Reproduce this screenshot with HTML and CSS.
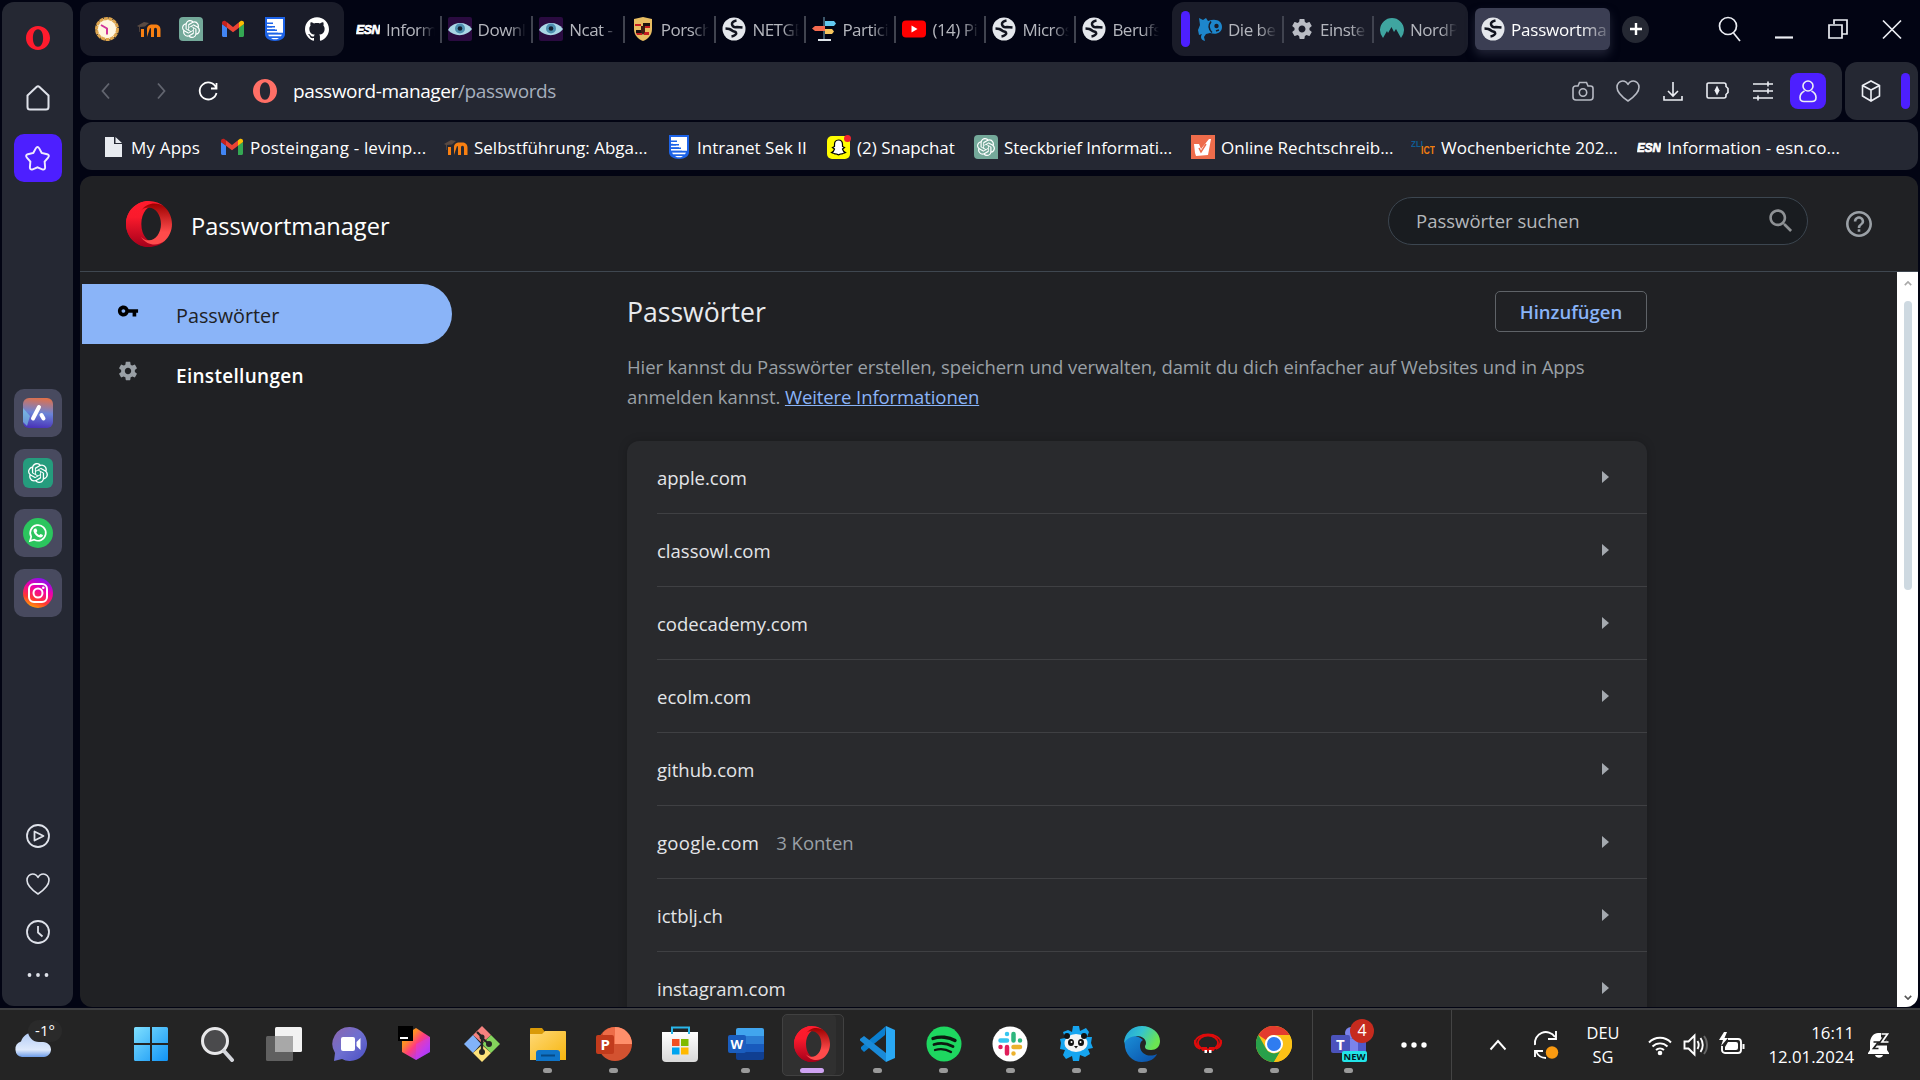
FILE: index.html
```html
<!DOCTYPE html>
<html lang="de">
<head>
<meta charset="utf-8">
<title>Passwortmanager</title>
<link rel="stylesheet" href="styles.css">
</head>
<body>
<svg class="defs" width="0" height="0">
  <defs>
    <linearGradient id="gRing" x1="0" y1="0" x2="0" y2="1"><stop offset="0" stop-color="#ff1b2d"/><stop offset=".35" stop-color="#fa1a2c"/><stop offset="1" stop-color="#a5001b"/></linearGradient>
    <linearGradient id="gInner" x1="0" y1="0" x2="0" y2="1"><stop offset="0" stop-color="#9c0000"/><stop offset=".7" stop-color="#ff4b4b"/></linearGradient>
    <linearGradient id="gWin" x1="0" y1="0" x2="1" y2="1"><stop offset="0" stop-color="#7fe0ff"/><stop offset="1" stop-color="#1193f5"/></linearGradient>
    <linearGradient id="gChat" x1="0" y1="0" x2="1" y2="1"><stop offset="0" stop-color="#8d66ad"/><stop offset=".5" stop-color="#6e6fd0"/><stop offset="1" stop-color="#4a4fc4"/></linearGradient>
    <linearGradient id="gBox" x1="0" y1="0" x2="1" y2="1"><stop offset="0" stop-color="#ffb000"/><stop offset=".3" stop-color="#ff8a2a"/><stop offset=".5" stop-color="#ff3c7f"/><stop offset=".75" stop-color="#b13bf0"/><stop offset="1" stop-color="#6a3cff"/></linearGradient>
    <linearGradient id="gFold" x1="0" y1="0" x2="1" y2="1"><stop offset="0" stop-color="#ffd977"/><stop offset="1" stop-color="#f6b50e"/></linearGradient>
    <linearGradient id="gIg" x1=".2" y1="1" x2=".6" y2="0"><stop offset="0" stop-color="#ffb300"/><stop offset=".3" stop-color="#ff3a2f"/><stop offset=".65" stop-color="#f000a8"/><stop offset="1" stop-color="#8a10f0"/></linearGradient>
    <linearGradient id="gAria" x1=".6" y1="0" x2=".5" y2="1"><stop offset="0" stop-color="#e0704a"/><stop offset=".5" stop-color="#6a84d8"/><stop offset="1" stop-color="#4a34b8"/></linearGradient>
    <linearGradient id="gEdgeT" x1="0" y1="0" x2="1" y2=".4"><stop offset="0" stop-color="#1f9fdb"/><stop offset=".5" stop-color="#34c3cf"/><stop offset="1" stop-color="#6be652"/></linearGradient>
    <linearGradient id="gEdgeB" x1="0" y1="0" x2="1" y2="1"><stop offset="0" stop-color="#1a8fd8"/><stop offset="1" stop-color="#0a4ea8"/></linearGradient>
    <linearGradient id="gCloud" x1="0" y1="0" x2="0" y2="1"><stop offset="0" stop-color="#b4cdf6"/><stop offset=".7" stop-color="#dfeafc"/><stop offset="1" stop-color="#6c9ce8"/></linearGradient>
    <linearGradient id="gStore" x1="0" y1="0" x2="0" y2="1"><stop offset="0" stop-color="#fff"/><stop offset="1" stop-color="#d9d9d9"/></linearGradient>
  </defs>
  <symbol id="opera" viewBox="0 0 24 24"><path fill-rule="evenodd" d="M12 0c6.6 0 12 5.4 12 12s-5.400 12-12 12S0 18.600 0 12 5.400 0 12 0zm0 3.200C8.800 3.200 6.900 7 6.900 12s1.900 8.800 5.100 8.800 5.100-3.800 5.100-8.800S15.200 3.200 12 3.200z"/></symbol>
  <symbol id="operaBig" viewBox="0 0 48 48"><path fill="url(#gRing)" d="M24 0C10.700 0 0 10.700 0 24s10.700 24 24 24c6 0 11.800-2.300 16-6-12 6-24-2-24-18S28 0 40 6C35.800 2.300 30 0 24 0z"/><path fill="url(#gInner)" d="M15.500 10.500C18 7 21 7 24 7c7 0 12.500 7.600 12.500 17S31 41 24 41c-3.500 0-6.500-1.400-8.500-3.800C22 47 33 47 40 42c5-4.500 8-11 8-18S45 10.500 40 6c-7-5-18-5-24.500 4.500z"/><path fill="url(#gRing)" d="M24 0C11 0 0 10.700 0 24s10.700 24 24 24c-4-.5-12-6-12-24S20 1 24 0z"/></symbol>
  <symbol id="gpt" viewBox="0 0 24 24"><path d="M22.2819 9.8211a5.9847 5.9847 0 0 0-.5157-4.9108 6.0462 6.0462 0 0 0-6.5098-2.9A6.0651 6.0651 0 0 0 4.9807 4.1818a5.9847 5.9847 0 0 0-3.9977 2.9 6.0462 6.0462 0 0 0 .7427 7.0966 5.98 5.98 0 0 0 .511 4.9107 6.051 6.051 0 0 0 6.5146 2.9001A5.9847 5.9847 0 0 0 13.2599 24a6.0557 6.0557 0 0 0 5.7718-4.2058 5.9894 5.9894 0 0 0 3.9977-2.9001 6.0557 6.0557 0 0 0-.7475-7.0729zm-9.022 12.6081a4.4755 4.4755 0 0 1-2.8764-1.0408l.1419-.0804 4.7783-2.7582a.7948.7948 0 0 0 .3927-.6813v-6.7369l2.02 1.1686a.071.071 0 0 1 .038.052v5.5826a4.504 4.504 0 0 1-4.4945 4.4944zm-9.6607-4.1254a4.4708 4.4708 0 0 1-.5346-3.0137l.142.0852 4.783 2.7582a.7712.7712 0 0 0 .7806 0l5.8428-3.3685v2.3324a.0804.0804 0 0 1-.0332.0615L9.74 19.9502a4.4992 4.4992 0 0 1-6.1408-1.6464zM2.3408 7.8956a4.485 4.485 0 0 1 2.3655-1.9728V11.6a.7664.7664 0 0 0 .3879.6765l5.8144 3.3543-2.0201 1.1685a.0757.0757 0 0 1-.071 0l-4.8303-2.7865A4.504 4.504 0 0 1 2.3408 7.872zm16.5963 3.8558L13.1038 8.364 15.1192 7.2a.0757.0757 0 0 1 .071 0l4.8303 2.7913a4.4944 4.4944 0 0 1-.6765 8.1042v-5.6772a.79.79 0 0 0-.407-.667zm2.0107-3.0231l-.142-.0852-4.7735-2.7818a.7759.7759 0 0 0-.7854 0L9.409 9.2297V6.8974a.0662.0662 0 0 1 .0284-.0615l4.8303-2.7866a4.4992 4.4992 0 0 1 6.6802 4.66zM8.3065 12.863l-2.02-1.1638a.0804.0804 0 0 1-.038-.0567V6.0742a4.4992 4.4992 0 0 1 7.3757-3.4537l-.142.0805L8.704 5.459a.7948.7948 0 0 0-.3927.6813zm1.0976-2.3654l2.602-1.4998 2.6069 1.4998v2.9994l-2.5974 1.4997-2.6067-1.4997Z"/></symbol>
  <symbol id="gptTile" viewBox="0 0 24 24"><path fill="#74a99a" d="M4 0h16a4 4 0 0 1 4 4v20H4a4 4 0 0 1-4-4V4a4 4 0 0 1 4-4z"/><use href="#gpt" x="3" y="3" width="18" height="18" fill="#fff"/></symbol>
  <symbol id="gmail" viewBox="0 0 24 24"><path fill="#4285f4" d="M1 7v11.500c0 .8.700 1.500 1.500 1.500H6v-9.500z"/><path fill="#34a853" d="M23 7v11.500c0 .8-.7 1.500-1.500 1.500H18v-9.500z"/><path fill="#c5221f" d="M1 6c0-2 2.200-2.700 3.700-1.700L6 5.300v5.400L1 7z"/><path fill="#fbbc04" d="M23 6c0-2-2.200-2.700-3.700-1.700L18 5.300v5.400L23 7z"/><path fill="#ea4335" d="M6 5.300l6 4.600 6-4.600v5.400l-6 4.600-6-4.600z"/></symbol>
  <symbol id="moodle" viewBox="0 0 24 24"><path fill="#f98012" d="M4 20v-8h3v8zm6 0v-7.500C10 9 12 7.500 15.500 7.500h2.500c3.500 0 5.500 2 5.500 5V20H20v-7c0-1.500-.6-2.300-1.600-2.300S17 11.500 17 13v7h-3v-7c0-1.500-.3-2-1-2z"/><path fill="#5a4a42" d="M0 9l7-4 5 1-4 3.500-5 .5-.3 5H2v-5z"/></symbol>
  <symbol id="crest" viewBox="0 0 24 24"><path fill="#1d63e8" d="M2 0h20v17c0 4-4 7-10 7S2 21 2 17z"/><path fill="#fff" d="M4 2h16v14h-5v-2h-3v-2H9v-2H6V7H4z"/><path fill="#fff" d="M4 3.500h6v1.800H4zM4 7h9v1.800H4zM4 10.500h11v1.800H4zM4 14h14v1.800H4zM5 17.500h14l-1 1.800H6zM8 21h8l-2 1.200h-4z"/><path stroke="#1d63e8" stroke-width="1.500" d="M3 6.200h7M3 9.700h9M3 13.200h11M3 16.600h18"/></symbol>
  <symbol id="globe" viewBox="0 0 24 24"><circle cx="12" cy="12" r="11.500" fill="#e4e7ec"/><path fill="none" stroke="#10131f" stroke-width="2.500" stroke-linejoin="round" d="M14.500 3.500C11.500 4 9.500 5.500 10 7.500s2.500 3 5 2.500l5.500.5M3.500 11.500c3 0 5 .5 6.500 2s3 .5 4 2-1.500 3.500-4.500 4"/></symbol>
  <symbol id="eye" viewBox="0 0 24 24"><rect width="24" height="24" rx="2" fill="#2a0b40"/><path fill="#a9d7e6" d="M0 13C5 4 18 4 24 12c-6 8-18 8-24 1z"/><circle cx="12" cy="11.500" r="5" fill="#4d8fb0"/><circle cx="12" cy="11.500" r="2.300" fill="#122030"/></symbol>
  <symbol id="esn" viewBox="0 0 24 24"><text x="0" y="16.500" textLength="24" lengthAdjust="spacingAndGlyphs" font-family="Liberation Sans" font-size="13" font-weight="bold" font-style="italic" fill="#fff" stroke="#fff" stroke-width=".7">ESN</text></symbol>
  <symbol id="gear" viewBox="0 0 24 24"><path d="M19.430 12.980c.04-.32.070-.64.070-.98s-.03-.66-.07-.98l2.110-1.650c.19-.15.240-.42.120-.64l-2-3.460c-.12-.22-.39-.3-.61-.22l-2.490 1c-.52-.4-1.080-.73-1.690-.98l-.38-2.650C14.460 2.180 14.250 2 14 2h-4c-.25 0-.46.180-.49.420l-.38 2.650c-.61.250-1.170.590-1.690.980l-2.490-1c-.23-.09-.49 0-.61.220l-2 3.460c-.13.220-.07.490.120.640l2.110 1.650c-.04.320-.07.650-.07.980s.03.660.070.980l-2.110 1.650c-.19.150-.24.420-.12.640l2 3.460c.12.220.390.3.610.220l2.490-1c.52.4 1.080.730 1.690.980l.38 2.650c.03.240.240.420.490.420h4c.25 0 .460-.18.490-.42l.38-2.650c.61-.25 1.170-.59 1.690-.98l2.490 1c.23.090.490 0 .610-.22l2-3.460c.12-.22.070-.49-.12-.64l-2.110-1.650zM12 15.500c-1.930 0-3.500-1.570-3.500-3.500s1.570-3.500 3.500-3.500 3.500 1.570 3.500 3.500-1.570 3.500-3.500 3.500z"/></symbol>
  <symbol id="heart" viewBox="0 0 24 24"><path fill="none" stroke="currentColor" stroke-width="1.600" stroke-linejoin="round" d="M12 22C6 18 1 13.500 1 8.300 1 4.700 3.600 2 6.700 2 9.200 2 11 3.500 12 5.500 13 3.500 14.800 2 17.300 2 20.400 2 23 4.700 23 8.300 23 13.500 18 18 12 22z"/></symbol>
</svg>

<div class="browser">
  <aside class="sidebar">
    <svg class="i24 red"><use href="#opera"/></svg>
    <svg class="home" viewBox="0 0 24 26"><path d="M1.500 10.500L10.500 2a2.200 2.200 0 0 1 3 0l9 8.500V22a2.500 2.500 0 0 1-2.500 2.500H4A2.500 2.500 0 0 1 1.500 22z"/></svg>
    <div class="tile accent"><svg class="star" viewBox="0 0 28 28"><path d="M12.200 3.500q1.800-3 3.600 0l2.500 4.600 5.700 1.500q3 1 1 3.400l-3.600 4.200.5 6q0 3-3 2l-4.900-2-4.900 2q-3 1-3-2l.5-6L3 13q-2-2.400 1-3.400l5.700-1.500z"/></svg></div>
    <div class="apps">
      <div class="tile"><svg class="i30" viewBox="0 0 30 30"><rect width="30" height="30" rx="6" fill="url(#gAria)"/><path fill="#7dd0e8" opacity=".6" d="M0 10l7 8-3 10-4-4z"/><path stroke="#fff" stroke-width="4" stroke-linecap="round" d="M16 9l-6 11.500M18.500 17l2 3.500"/></svg></div>
      <div class="tile"><svg class="i30" viewBox="0 0 30 30"><rect width="30" height="30" rx="6" fill="#259c7d"/><use href="#gpt" x="5" y="5" width="20" height="20" fill="#fff"/></svg></div>
      <div class="tile"><svg class="i30" viewBox="0 0 30 30"><circle cx="15" cy="15" r="15" fill="#2bc55e"/><path fill="none" stroke="#fff" stroke-width="1.700" d="M7 23l1.200-4.300a7.800 7.800 0 1 1 3 3z"/><path fill="#fff" d="M12 10.500l1.300.1 1 2.500-.9 1.300c.7 1.300 1.600 2.100 3 2.700l1.200-1.200 2.300 1.200c.2 1.700-1.400 2.700-3 2.300-3-.7-5.600-3-6.300-6-.3-1.200.3-2.600 1.400-2.900z"/></svg></div>
      <div class="tile"><svg class="i30" viewBox="0 0 30 30"><circle cx="15" cy="15" r="15" fill="url(#gIg)"/><g fill="none" stroke="#fff" stroke-width="2"><rect x="6" y="6" width="18" height="18" rx="5"/><circle cx="15" cy="15" r="4.500"/></g><circle cx="20.300" cy="9.700" r="1.300" fill="#fff"/></svg></div>
    </div>
    <div class="tools">
      <svg class="i24" viewBox="0 0 24 24"><circle cx="12" cy="12" r="11"/><path d="M8.500 7.500v9l9-4.500z" stroke-linejoin="round"/></svg>
      <svg class="i24"><use href="#heart"/></svg>
      <svg class="i24" viewBox="0 0 24 24"><circle cx="12" cy="12" r="11"/><path d="M12 6v6.500l4.500 4"/></svg>
      <svg class="more" viewBox="0 0 22 4"><g fill="currentColor" stroke="none"><circle cx="2.500" cy="2" r="1.900"/><circle cx="11" cy="2" r="1.900"/><circle cx="19.500" cy="2" r="1.900"/></g></svg>
    </div>
  </aside>

  <div class="window">
    <div class="tabbar">
      <div class="pinned">
        <svg class="i24" viewBox="0 0 24 24"><circle cx="12" cy="12" r="10.500" fill="#fff6e0" stroke="#dfa64e" stroke-width="3" stroke-dasharray="4 .6"/><path d="M6 8l6 3.500v6" fill="none" stroke="#d0359a" stroke-width="2"/></svg>
        <svg class="i24"><use href="#moodle"/></svg>
        <svg class="i24"><use href="#gptTile"/></svg>
        <svg class="i24"><use href="#gmail"/></svg>
        <svg class="i24"><use href="#crest"/></svg>
        <svg class="i24" viewBox="0 0 24 24"><path fill="#fff" d="M12 .297c-6.630 0-12 5.373-12 12 0 5.303 3.438 9.800 8.205 11.385.6.113.820-.258.820-.577 0-.285-.01-1.040-.015-2.040-3.338.724-4.042-1.610-4.042-1.610C4.422 18.070 3.633 17.700 3.633 17.700c-1.087-.744.084-.729.084-.729 1.205.084 1.838 1.236 1.838 1.236 1.070 1.835 2.809 1.305 3.495.998.108-.776.417-1.305.760-1.605-2.665-.3-5.466-1.332-5.466-5.930 0-1.310.465-2.380 1.235-3.220-.135-.303-.54-1.523.105-3.176 0 0 1.005-.322 3.300 1.230.960-.267 1.980-.399 3-.405 1.020.006 2.040.138 3 .405 2.280-1.552 3.285-1.230 3.285-1.230.645 1.653.240 2.873.120 3.176.765.840 1.230 1.910 1.230 3.220 0 4.610-2.805 5.625-5.475 5.920.420.360.810 1.096.810 2.220 0 1.606-.015 2.896-.015 3.286 0 .315.210.690.825.570C20.565 22.092 24 17.592 24 12.297c0-6.627-5.373-12-12-12"/></svg>
      </div>
      <div class="tabs">
        <div class="tab wide"><svg class="i24"><use href="#esn"/></svg><span>Inform</span></div>
        <div class="tab wide"><svg class="i24"><use href="#eye"/></svg><span>Downl</span></div>
        <div class="tab wide"><svg class="i24"><use href="#eye"/></svg><span>Ncat -</span></div>
        <div class="tab wide"><svg class="i24" viewBox="0 0 24 24"><path fill="#e8bd62" d="M3 2l9-2 9 2v10c0 6-4 10-9 12-5-2-9-6-9-12z"/><path fill="#1b1210" d="M12 6h7v3h-7zM5 13h6v3H5z"/><path fill="#c51d22" d="M12 9h7v2h-7zM5 16h6v2H6zM4 7h6v2H4zM13 15h5v3h-5z"/><path fill="#3b1d12" d="M10 9h4v6l-2 3-2-3z"/></svg><span>Porsch</span></div>
        <div class="tab"><svg class="i24"><use href="#globe"/></svg><span>NETGE</span></div>
        <div class="tab"><svg class="i24" viewBox="0 0 24 24"><path fill="#3b5568" d="M11 0h2v22h-2z"/><path fill="#dfe5ea" d="M6 22h13v2H6z"/><path fill="#63c9f0" d="M13 4h9l2 2.500L22 9h-9z"/><path fill="#f4694f" d="M13 9v5H3L0 11.500 3 9z"/><path fill="#f7c65e" d="M13 12h7l2 2.500-2 2.500h-7z"/></svg><span>Partici</span></div>
        <div class="tab"><svg class="i24" viewBox="0 0 24 24"><rect y="3.500" width="24" height="17" rx="4" fill="#f00"/><path fill="#fff" d="M9.500 8.500v7l6-3.500z"/></svg><span>(14) Pi</span></div>
        <div class="tab"><svg class="i24"><use href="#globe"/></svg><span>Micros</span></div>
        <div class="tab last"><svg class="i24"><use href="#globe"/></svg><span>Berufs</span></div>
      </div>
      <div class="group">
        <i class="strip"></i>
        <div class="tab"><svg class="i24" viewBox="0 0 24 24"><path fill="#1d86cc" d="M1 1l4 2 3-2 2 3c8-3 14 0 14 6s-6 8-12 6l-4 1-2 3 1 4c-4-1-5-4-3-7l-3 1-1-5 2-5z"/><path fill="none" stroke="#1a1c29" stroke-width="1.500" d="M13 4.500c-3 4-2 8 1 11M18 14l3-1"/><circle cx="18.500" cy="9" r="2.200" fill="#1a1c29"/></svg><span>Die be</span></div>
        <div class="tab"><svg class="i24 grey"><use href="#gear"/></svg><span>Einste</span></div>
        <div class="tab last"><svg class="i24" viewBox="0 0 24 24"><path fill="#3fa5a0" d="M3 21A12 12 0 1 1 21 21l-5-9-2 3-2.500-5L8 16l-1-2z"/></svg><span>NordP</span></div>
      </div>
      <div class="tab active"><svg class="i24"><use href="#globe"/></svg><span>Passwortma</span></div>
      <div class="plus"><svg viewBox="0 0 12 12"><path d="M6 0v12M0 6h12"/></svg></div>
      <div class="controls">
        <svg viewBox="0 0 24 26"><circle cx="10" cy="10" r="8.500"/><path d="M15.500 17l6.500 8"/></svg>
        <svg viewBox="0 0 24 26"><path d="M3 21.500h18" stroke-width="2.200"/></svg>
        <svg viewBox="0 0 24 26"><path d="M8 8V4h13v14h-5M3 9h13v13H3z"/></svg>
        <svg viewBox="0 0 24 26"><path d="M3 4.500l18 18M21 4.500l-18 18"/></svg>
      </div>
    </div>

    <div class="addressrow">
      <div class="address">
        <svg class="nav back" viewBox="0 0 24 24"><path d="M14 4.500L7.500 12l6.500 7.500"/></svg>
        <svg class="nav forward" viewBox="0 0 24 24"><path d="M10 4.500l6.500 7.500-6.500 7.500"/></svg>
        <svg class="nav" viewBox="0 0 24 24"><path d="M20 8.500A8.500 8.500 0 1 0 20.500 14M20.500 4v5.500H15"/></svg>
        <svg class="i24 salmon"><use href="#opera"/></svg>
        <p class="url">password-manager<span>/passwords</span></p>
        <div class="actions">
          <svg class="soft" viewBox="0 0 24 24"><path d="M4.500 7H7l1.500-3.500h7L17 7h2.500A2.500 2.500 0 0 1 22 9.500V18a3 3 0 0 1-3 3H5a3 3 0 0 1-3-3V9.500A2.500 2.500 0 0 1 4.500 7z"/><circle cx="12" cy="13.500" r="3.700"/></svg>
          <svg class="soft"><use href="#heart"/></svg>
          <svg viewBox="0 0 24 24"><path d="M12 3v14M7 12l5 5 5-5M3 17v4h18v-4"/></svg>
          <svg viewBox="0 0 24 24"><path d="M2.500 4H18a2 2 0 0 1 2 2v1.500l2 2v4l-2 2V17a2 2 0 0 1-2 2H2.500A1.500 1.500 0 0 1 1 17.500v-12A1.500 1.500 0 0 1 2.500 4z"/><path fill="currentColor" stroke="none" d="M11 6.500L8.500 11.500l2.500 5 2.500-5z"/></svg>
          <svg viewBox="0 0 24 24"><path d="M2 5h20M2 12h20M2 19h20M17 2.500v5M17 9.500v5M7 16.500v5"/></svg>
          <div class="user"><svg viewBox="0 0 24 24"><circle cx="12" cy="7" r="5"/><path d="M8.500 12C5.500 13.500 4 16 4 18.500 4 21 5.500 22.500 8 22.500h8c2.500 0 4-1.500 4-4 0-2.500-1.500-5-4.500-6.500"/></svg></div>
        </div>
      </div>
      <div class="extension"><svg viewBox="0 0 24 24"><path d="M12 2l8.500 4.500v10.500L12 22l-8.500-5V6.500zM3.500 6.500L12 11l8.500-4.500M12 11v11"/></svg><i class="strip"></i></div>
    </div>

    <div class="bookmarks">
      <a><svg class="i24" viewBox="0 0 24 24"><path fill="#e8ebf0" d="M4 2h9v7h8v13H4zM14.500 2L21 8h-6.500z"/></svg><span class="loose">My Apps</span></a>
      <a><svg class="i24"><use href="#gmail"/></svg><span class="loose">Posteingang - levinp...</span></a>
      <a><svg class="i24"><use href="#moodle"/></svg><span>Selbstführung: Abga...</span></a>
      <a><svg class="i24"><use href="#crest"/></svg><span>Intranet Sek II</span></a>
      <a><svg class="i24" viewBox="0 0 24 24"><rect x="0" y="1" width="23" height="23" rx="5" fill="#fffc00"/><path fill="#fff" stroke="#000" stroke-width="1.200" d="M11.500 5c3 0 4 2 4 4.500v2l2 1-2 1.500c.5 2 1.500 3 3 3.500-1.500 1-3 .5-3.500 1.500-2-.5-2 .8-3.500.8s-1.500-1.300-3.500-.8c-.5-1-2-.5-3.500-1.500 1.500-.5 2.500-1.500 3-3.500l-2-1.500 2-1v-2C7.500 7 8.500 5 11.500 5z"/><circle cx="20.500" cy="3.500" r="3.500" fill="#f0242e"/></svg><span>(2) Snapchat</span></a>
      <a><svg class="i24"><use href="#gptTile"/></svg><span class="tight">Steckbrief Informati...</span></a>
      <a><svg class="i24" viewBox="0 0 24 24"><path fill="#ee6c4b" d="M0 0h24v24H0z"/><path fill="#fff" d="M3 9h5l2 5 8-10h2l-3 16-12 1-1-3z"/><path stroke="#ee6c4b" stroke-width="1.500" d="M8 13l2 4 5-8" fill="none"/></svg><span>Online Rechtschreib...</span></a>
      <a><svg class="i24" viewBox="0 0 24 24"><text x="0" y="12" font-family="Liberation Sans" font-weight="bold" font-size="9" textLength="12" lengthAdjust="spacingAndGlyphs" fill="#0e5c93">ZLI</text><text x="10" y="19" font-family="Liberation Sans" font-weight="bold" font-size="10" textLength="14" lengthAdjust="spacingAndGlyphs" fill="#f07d10">ICT</text></svg><span>Wochenberichte 202...</span></a>
      <a><svg class="i24"><use href="#esn"/></svg><span>Information - esn.co...</span></a>
    </div>

    <div class="page">
      <header class="top">
        <svg class="logo"><use href="#operaBig"/></svg>
        <h1>Passwortmanager</h1>
        <div class="search"><span>Passwörter suchen</span><svg viewBox="2 2 20 20"><path d="M15.500 14h-.79l-.28-.27C15.410 12.590 16 11.110 16 9.500 16 5.910 13.090 3 9.500 3S3 5.910 3 9.500 5.910 16 9.500 16c1.610 0 3.090-.59 4.230-1.570l.27.280v.790l5 4.990L20.490 19l-4.990-5zm-6 0C7.010 14 5 11.990 5 9.500S7.010 5 9.500 5 14 7.010 14 9.500 11.990 14 9.500 14z"/></svg></div>
        <svg class="help" viewBox="2 2 20 20"><path d="M11 18h2v-2h-2v2zm1-16C6.480 2 2 6.480 2 12s4.480 10 10 10 10-4.480 10-10S17.520 2 12 2zm0 18c-4.410 0-8-3.590-8-8s3.590-8 8-8 8 3.590 8 8-3.590 8-8 8zm0-14c-2.210 0-4 1.790-4 4h2c0-1.100.9-2 2-2s2 .9 2 2c0 2-3 1.750-3 5h2c0-2.250 3-2.500 3-5 0-2.210-1.790-4-4-4z"/></svg>
      </header>
      <div class="content">
        <nav class="menu">
          <a class="selected"><svg viewBox="0 0 24 24"><path d="M12.650 10C11.830 7.670 9.610 6 7 6c-3.310 0-6 2.690-6 6s2.690 6 6 6c2.610 0 4.830-1.670 5.650-4H17v4h4v-4h2v-4H12.650zM7 14c-1.100 0-2-.9-2-2s.9-2 2-2 2 .9 2 2-.9 2-2 2z"/></svg><span>Passwörter</span></a>
          <a><svg viewBox="0 0 24 24"><use href="#gear"/></svg><span>Einstellungen</span></a>
        </nav>
        <main>
          <div class="headline"><h2>Passwörter</h2><button><span>Hinzufügen</span></button></div>
          <p class="intro">Hier kannst du Passwörter erstellen, speichern und verwalten, damit du dich einfacher auf Websites und in Apps<br>anmelden kannst. <a>Weitere Informationen</a></p>
          <ul class="list">
            <li><span>apple.com</span></li>
            <li><span>classowl.com</span></li>
            <li><span>codecademy.com</span></li>
            <li><span>ecolm.com</span></li>
            <li><span>github.com</span></li>
            <li><span class="wider">google.com</span><em>3 Konten</em></li>
            <li><span>ictblj.ch</span></li>
            <li><span>instagram.com</span></li>
          </ul>
        </main>
        <div class="scroll"><svg viewBox="0 0 10 6"><path d="M1 5l4-4 4 4"/></svg><i></i><svg class="down" viewBox="0 0 10 6"><path d="M1 1l4 4 4-4"/></svg></div>
      </div>
    </div>
  </div>
</div>

<footer class="taskbar">
  <div class="weather"><svg viewBox="0 0 38 26"><path fill="url(#gCloud)" d="M8 25a8 8 0 0 1-1-15.500C9 4 13 1 17 1c5 0 6 7 12 9 5 0 8 4 8 7.500S34 25 30 25z"/></svg><b>-1°</b></div>
  <div class="dock">
    <div class="app"><svg viewBox="0 0 36 36"><g fill="url(#gWin)"><path d="M1 2.500A1.500 1.500 0 0 1 2.500 1H17v16H1zM19 1h14.500A1.500 1.500 0 0 1 35 2.500V17H19zM1 19h16v16H2.500A1.500 1.500 0 0 1 1 33.500zM19 19h16v14.500a1.500 1.500 0 0 1-1.500 1.500H19z"/></g></svg></div>
    <div class="app"><svg viewBox="0 0 36 36"><circle cx="16" cy="15" r="12.500" fill="#4a4a4c" stroke="#e8e8ea" stroke-width="3"/><path d="M25 25l8 9" stroke="#d4d6dc" stroke-width="4" stroke-linecap="round"/></svg></div>
    <div class="app"><svg viewBox="0 0 36 36"><rect x="9" y="1" width="27" height="25" rx="1.500" fill="#f2f2f2"/><rect x="0" y="10" width="27" height="25" rx="1.500" fill="#6b6b6b" opacity=".85"/><path fill="#a8a8a8" d="M9 10h18v16H9z"/></svg></div>
    <div class="app"><svg viewBox="0 0 36 36"><path fill="url(#gChat)" d="M18 1a17 17 0 1 1-8 32l-8 2 1-8A17 17 0 0 1 18 1z"/><rect x="9" y="11" width="14" height="14" rx="2" fill="#fff"/><path fill="#fff" d="M24.500 16l4-4v12l-4-4z"/></svg></div>
    <div class="app"><svg viewBox="0 0 36 36"><path fill="url(#gBox)" d="M18 2l14 9v15l-14 8-14-8V11z"/><path fill="#d43cf0" opacity=".4" d="M18 18l14-7v15l-14 8z"/><path d="M0 0h15v15H0z"/><path fill="#fff" d="M2 11h8v2H2z"/></svg></div>
    <div class="app"><svg viewBox="0 0 36 36"><path fill="#f5827f" d="M18 0l9 9-9 8-9-8z"/><path fill="#82b3fa" d="M9 9l8 9-8 9-9-9z"/><path fill="#84d45c" d="M27 9l9 9-9 9-9-9z"/><path fill="#fde27a" d="M18 19l9 8-9 9-9-9z"/><path stroke="#262626" stroke-width="2.300" d="M13 6l5 5v15M18 12l7 6" fill="none"/><circle cx="18" cy="26" r="3" fill="#262626"/><circle cx="25" cy="18" r="3" fill="#262626"/><circle cx="18" cy="11" r="2.500" fill="#262626"/></svg></div>
    <div class="app run"><svg viewBox="0 0 36 36"><path fill="#d99a08" d="M0 3a1 1 0 0 1 1-1h11l3 4v5H0z"/><path fill="url(#gFold)" d="M0 8h12l3-3h20a1 1 0 0 1 1 1v28H0z"/><path fill="#0f74c8" d="M6 35V27a3 3 0 0 1 3-3h18a3 3 0 0 1 3 3v8z"/><path stroke="#064a86" stroke-width="2" d="M11 29.500h14"/></svg></div>
    <div class="app run"><svg viewBox="0 0 36 36"><circle cx="19" cy="18" r="17" fill="#d35230"/><path fill="#ff8f6b" d="M19 1a17 17 0 0 1 17 17H19z"/><path fill="#ed6c47" d="M19 1v17H7V6.500A17 17 0 0 1 19 1z"/><rect y="9" width="18" height="19" rx="2" fill="#c23b1c"/><text x="4.500" y="24" font-family="Open Sans" font-weight="bold" font-size="15" fill="#fff">P</text></svg></div>
    <div class="app"><svg viewBox="0 0 36 36"><path fill="none" stroke="#29b6ea" stroke-width="2" d="M10 8V1.500h17V8"/><path fill="url(#gStore)" d="M0 6h36v26a4 4 0 0 1-4 4H4a4 4 0 0 1-4-4z"/><path fill="none" stroke="#29b6ea" stroke-width="2" d="M10 5v3M27 5v3"/><path fill="#f25022" d="M10 13h7.500v7H10z"/><path fill="#7fba00" d="M19 13h7.500v7H19z"/><path fill="#00a4ef" d="M10 21.500h7.500v7H10z"/><path fill="#ffb900" d="M19 21.500h7.500v7H19z"/></svg></div>
    <div class="app run"><svg viewBox="0 0 36 36"><path fill="#41a5ee" d="M8 4a2 2 0 0 1 2-2h24a2 2 0 0 1 2 2v6H8z"/><path fill="#2b7cd3" d="M8 10h28v8H8z"/><path fill="#185abd" d="M8 18h28v8H8z"/><path fill="#103f91" d="M8 26h28v6a2 2 0 0 1-2 2H10a2 2 0 0 1-2-2z"/><rect y="9" width="18" height="18" rx="2" fill="#1a5dbe"/><text x="2.500" y="23" font-family="Open Sans" font-weight="bold" font-size="13" fill="#fff">W</text></svg></div>
    <div class="app current"><svg viewBox="0 0 36 36"><use href="#operaBig" width="36" height="36"/></svg></div>
    <div class="app run"><svg viewBox="0 0 36 36"><path fill="#0a7fd0" d="M26 0l-1 9L4 26l-3-3v-2L26 0z"/><path fill="#1a8ad8" d="M4 10l22 17v9L0 14.500V13z"/><path fill="#29a8f4" d="M26 0l9 4v28l-9 4z"/></svg></div>
    <div class="app run"><svg viewBox="0 0 36 36"><circle cx="18" cy="18" r="17.500" fill="#1ed760"/><path fill="none" stroke="#0c1a10" stroke-linecap="round" d="M7 12.500c7-2.500 16-1.500 22 2" stroke-width="3.400"/><path fill="none" stroke="#0c1a10" stroke-linecap="round" d="M8 18.500c6-2 13-1.300 19 2" stroke-width="2.800"/><path fill="none" stroke="#0c1a10" stroke-linecap="round" d="M9 24c5-1.500 11-1 16 2" stroke-width="2.300"/></svg></div>
    <div class="app run"><svg viewBox="0 0 36 36"><circle cx="18" cy="18" r="17.500" fill="#fff"/><g stroke-width="4.500" stroke-linecap="round"><path stroke="#36c5f0" d="M15 8v0M8.500 14.500H15"/><path stroke="#2eb67d" d="M21.500 8v6.500M28 14.500v0"/><path stroke="#ecb22e" d="M21.500 21H28M21.500 27.500v0"/><path stroke="#e01e5a" d="M15 21v6.500M8.500 21v0"/></g></svg></div>
    <div class="app run"><svg viewBox="0 0 36 36"><path fill="#16a5f0" d="M15 0h6l1 5 6-3 3 4-2 5h5l-1 6 2 5-5 1 2 5-5 3-5-2-1 6h-6l-1-5-6 3-3-4 2-5-5-1 1-6-1-4 5-1-2-6 5-2 4 2z"/><ellipse cx="18" cy="17" rx="11.500" ry="9" fill="#f4f4f4"/><circle cx="9" cy="10" r="3" fill="#111"/><circle cx="26" cy="10" r="3" fill="#111"/><ellipse cx="13" cy="16.500" rx="3" ry="3.500" fill="#111"/><ellipse cx="23" cy="16.500" rx="3" ry="3.500" fill="#111"/><circle cx="13.500" cy="16" r="1" fill="#fff"/><circle cx="22.500" cy="16" r="1" fill="#fff"/><path fill="#111" d="M16 20h4l-2 2.500z"/></svg></div>
    <div class="app run"><svg viewBox="0 0 36 36"><path fill="url(#gEdgeB)" d="M1 14C-1 26 7 36 18 36c7 0 13-3 15-8-8 4-17 0-17-8 0-3 1-5 3-6C12 8 4 9 1 14z"/><path fill="url(#gEdgeT)" d="M0 18C0 7 8 0 18 0s18 7 18 15c0 6-4 9-9 9-4 0-6-1-6-3s1-2 1-4c0-4-4-7-9-7C6 10 1 14 0 18z"/></svg></div>
    <div class="app run"><svg viewBox="0 0 36 36"><g fill="none" stroke="#e00b0b" stroke-width="1.800"><ellipse cx="18" cy="16" rx="12.500" ry="7.500"/><ellipse cx="18" cy="17" rx="10" ry="7.500"/><path d="M10 23c-4-1-6-5-5-9M26 23c4-1 6-5 5-9"/></g><path fill="#e00b0b" d="M12 21h5v4h-5zM19 21h5v4h-5z"/><path fill="#fff" d="M14.500 24h2.500v3h-2.500zM19 24h2.500v3H19z"/></svg></div>
    <div class="app run"><svg viewBox="0 0 36 36"><circle cx="18" cy="18" r="18" fill="#fbc116"/><path fill="#e33b2e" d="M2.400 9A18 18 0 0 1 33.600 9H18a9 9 0 0 0-8 5z"/><path fill="#28a04a" d="M2.400 9A18 18 0 0 0 18 36l8-13.500a9 9 0 0 1-16 0z"/><path fill="#fbc116" d="M33.600 9A18 18 0 0 1 18 36l8-13.500a9 9 0 0 0-8-13.500z"/><circle cx="18" cy="18" r="9" fill="#fff"/><circle cx="18" cy="18" r="7" fill="#2f7cf0"/></svg></div>
  </div>
  <div class="pins">
    <div class="app run"><svg class="teams" viewBox="0 0 44 44"><circle cx="20" cy="12" r="6" fill="#7b83eb"/><path fill="#7b83eb" d="M15 18h20v14a8 8 0 0 1-16 0z"/><path fill="#5059c9" d="M27 18h8v14h-8z"/><rect y="14" width="19" height="18" rx="2" fill="#4b53bc"/><text x="5" y="28.500" font-family="Open Sans" font-weight="bold" font-size="15" fill="#fff">T</text><rect x="11" y="30" width="25" height="11" rx="2" fill="#22e4e8"/><text x="12.500" y="39" font-family="Open Sans" font-weight="bold" font-size="9.500" textLength="22" lengthAdjust="spacingAndGlyphs" fill="#041c24">NEW</text></svg><span class="count">4</span></div>
    <svg class="dots" viewBox="0 0 26 6"><g fill="#fff"><circle cx="3" cy="3" r="2.700"/><circle cx="13" cy="3" r="2.700"/><circle cx="23" cy="3" r="2.700"/></g></svg>
  </div>
  <div class="tray">
    <svg class="chev" viewBox="0 0 18 12"><path d="M1.500 10.500L9 2l7.500 8.500"/></svg>
    <svg class="sync" viewBox="0 0 26 30"><path d="M2 15A11 11 0 0 1 22 7M23 1v8h-8M2 27v-6h8M3 21c2 5 6 7 10 7"/><circle cx="19" cy="22.500" r="6.200" fill="#f99a11" stroke="none"/></svg>
    <div class="lang">DEU<br>SG</div>
    <svg class="wifi" viewBox="0 0 24 22"><path d="M1 8.500a15 15 0 0 1 22 0M4.500 12.500a10.500 10.500 0 0 1 15 0M8 16a6 6 0 0 1 8 0"/><circle cx="12" cy="19" r="2.300" fill="#fff" stroke="none"/></svg>
    <svg class="vol" viewBox="0 0 26 24"><path d="M1.500 8.500h4l6-6v19l-6-6h-4zM14.500 8c1.500 2.500 1.500 5.500 0 8M17.500 5c3 4 3 10 0 14"/><path stroke="#666" d="M21 3c4 5 4 13 0 18"/></svg>
    <svg class="batt" viewBox="0 0 26 26"><path d="M9 7h10a3 3 0 0 1 3 3v8a3 3 0 0 1-3 3H6a3 3 0 0 1-3-3v-4"/><path fill="#fff" stroke="none" d="M9 10h8a2 2 0 0 1 2 2v4a2 2 0 0 1-2 2H6v-3zM23.500 12h2v5h-2zM5 0L0 8h4l-2 6 7-8H5.500L8 0z"/></svg>
    <div class="clock">16:11<br>12.01.2024</div>
    <svg class="bell" viewBox="0 0 22 26"><path fill="#fff" stroke="none" d="M2 18v-7c0-6 4-10 8-10h5l4 8v9l2 3v1H0v-1zM7 23h8c-1 3.500-7 3.500-8 0z"/><path stroke="#222" stroke-width="1.700" d="M5.500 10h5l-5 6.500h5"/><path stroke="#222" stroke-width="5" d="M13 3h6l-5.500 8H20"/><path stroke="#fff" stroke-width="1.700" d="M13.500 2h6L14 10h6.500"/></svg>
  </div>
</footer>
</body>
</html>
```
FILE: styles.css
```css
* { box-sizing: border-box; }
body { margin: 0; width: 1920px; height: 1080px; overflow: hidden; background: #020413; color: #fff; font-family: "Open Sans", "Noto Sans", sans-serif; display: flex; flex-direction: column; }
p, h1, h2, ul { margin: 0; padding: 0; font-weight: 400; }
svg { display: block; flex: none; }
.defs { position: absolute; }
.i24 { width: 24px; height: 24px; }
.i30 { width: 30px; height: 30px; }
.browser { height: 1008px; display: flex; padding: 2px 2px 1px; gap: 7px; }

/* Sidebar */
.sidebar { width: 71px; height: 1004px; background: #252833; border-radius: 12px; display: flex; flex-direction: column; align-items: center; padding-top: 24px; color: #dfe2ea; }
.red { fill: #ff1b2d; }
.salmon { fill: #ff6f66; }
.grey { fill: #b9bcc4; }
.home { width: 24px; height: 26px; margin-top: 35px; fill: none; stroke: #dfe2ea; stroke-width: 2; }
.tile { width: 48px; height: 48px; border-radius: 10px; background: #484a5f; display: flex; align-items: center; justify-content: center; }
.accent { margin-top: 23px; background: #4d1fff; }
.star { width: 27px; height: 27px; fill: none; stroke: #efeaff; stroke-width: 2; }
.apps { margin-top: 207px; display: flex; flex-direction: column; gap: 12px; }
.tools { margin-top: 207px; display: flex; flex-direction: column; align-items: center; gap: 24px; fill: none; stroke: currentColor; stroke-width: 1.8; }
.more { width: 22px; height: 4px; margin-top: 5px; }

/* Tabs */
.window { width: 1838px; display: flex; flex-direction: column; }
.tabbar { height: 54px; display: flex; align-items: center; }
.pinned { width: 264px; height: 54px; border-radius: 12px; background: #1a1c29; display: flex; align-items: center; gap: 18px; padding-left: 15px; }
.tabs { display: flex; margin-left: 6px; width: 822px; }
.tab { display: flex; align-items: center; width: 90px; padding-left: 6px; gap: 6px; color: #b4b6bd; font-size: 17px; letter-spacing: -.5px; }
.tab.wide { width: 91.6px; }
.tab span { flex: 1; min-width: 0; margin-right: 5px; white-space: nowrap; overflow: hidden; line-height: 27px; mask-image: linear-gradient(90deg, #000 65%, transparent); }
.tab::after { content: ""; width: 2px; height: 27px; background: #40434f; margin-left: -6px; }
.tab.last::after, .tab.active::after { display: none; }
.tab.last span { margin-right: 7px; }
.group { width: 296px; height: 54px; border-radius: 12px; background: #1a1c29; display: flex; align-items: center; padding-left: 9px; }
.strip { width: 9px; height: 36px; border-radius: 5px; background: #4d1fff; }
.group .tab:nth-child(2) { padding-left: 8px; width: 94px; }
.tab.active { width: 135px; height: 42px; margin-left: 7px; border-radius: 6px; background: #3b3e53; color: #fff; box-shadow: 0 5px 10px #3b3e5388; letter-spacing: -.2px; }
.tab.active span { margin-right: 3px; mask-image: linear-gradient(90deg, #000 72%, #0003); }
.plus { width: 27px; height: 27px; margin-left: 12px; border-radius: 50%; background: #252833; display: flex; align-items: center; justify-content: center; }
.plus svg { width: 12px; height: 12px; stroke: #fff; stroke-width: 2.4; }
.controls { display: flex; gap: 30px; margin-left: 69px; }
.controls svg { width: 24px; height: 26px; fill: none; stroke: #eceef4; stroke-width: 1.7; }

/* Address row */
.addressrow { display: flex; gap: 3px; margin-top: 6px; height: 58px; }
.address { width: 1762px; background: #252833; border-radius: 12px; display: flex; align-items: center; padding: 0 16px 0 15px; }
.nav { width: 24px; height: 24px; fill: none; stroke: #fff; stroke-width: 1.8; margin-right: 33px; }
.back { stroke: #62656f; margin-right: 29px; }
.forward { stroke: #62656f; margin-right: 24px; }
.url { margin-left: 16px; font-size: 19px; letter-spacing: -.38px; color: #fff; white-space: nowrap; }
.url span { color: #a6afbd; }
.actions { margin-left: auto; display: flex; align-items: center; gap: 21px; }
.actions svg, .extension svg { width: 24px; height: 24px; fill: none; stroke: #eceef4; stroke-width: 1.6; color: #eceef4; }
.actions .soft { color: #b7bac4; stroke: #b7bac4; }
.user { width: 36px; height: 36px; border-radius: 8px; background: #4d1fff; display: flex; align-items: center; justify-content: center; margin-left: -6px; }
.extension { width: 73px; border-radius: 12px; background: #252833; display: flex; align-items: center; justify-content: space-between; padding: 0 8px 0 14px; }

/* Bookmarks */
.bookmarks { margin-top: 2px; height: 48px; background: #252833; border-radius: 12px; display: grid; grid-template-columns: 119px 224px 223px 160px 147px 217px 220px 226px 210px; align-items: center; padding: 2px 0 0 21px; font-size: 17px; }
.bookmarks a { display: flex; align-items: center; gap: 6px; white-space: nowrap; }
.loose { letter-spacing: .17px; }
.tight { letter-spacing: -.1px; }

/* Page */
.page { margin-top: 6px; height: 831px; background: #202124; border-radius: 12px; overflow: hidden; display: flex; flex-direction: column; }
.top { height: 96px; border-bottom: 1px solid #3f4750; display: flex; align-items: flex-start; padding-left: 46px; }
.logo { width: 46px; height: 46px; margin-top: 25px; }
.top h1 { font-size: 23.6px; line-height: 32px; margin: 34px 0 0 19px; width: 1197px; }
.top h1, .menu, .search { white-space: nowrap; }
.search { width: 420px; height: 48px; margin-top: 21px; border: 1px solid #3c4650; border-radius: 25px; background: #191c20; display: flex; align-items: center; justify-content: space-between; padding: 0 13px 1px 27px; font-size: 18.5px; color: #b4b7bb; }
.search svg { width: 26px; height: 26px; fill: #8e9194; }
.help { width: 26px; height: 26px; margin: 35px 0 0 38px; fill: #9aa0a6; }
.content { display: flex; flex: 1; min-height: 0; }
.menu { width: 370px; margin: 12px 0 0 2px; font-size: 19px; letter-spacing: .3px; }
.menu a { height: 60px; display: flex; align-items: center; padding-left: 35px; font-weight: 600; }
.menu svg { width: 22px; height: 22px; margin: 0 37px 6px 0; fill: #9aa0a6; }
.menu span { padding-top: 3px; }
.menu .selected { background: #8ab4f8; color: #202124; border-radius: 0 30px 30px 0; font-weight: 400; letter-spacing: 0; font-size: 19.8px; }
.menu .selected span { padding-top: 2px; }
.menu .selected svg { fill: #000; }
main { width: 1020px; margin-left: 175px; }
.headline { height: 41px; margin-top: 19px; display: flex; align-items: center; justify-content: space-between; }
.headline h2 { font-size: 26.6px; padding-top: 1px; color: #e8eaed; }
button { width: 152px; height: 41px; padding: 0; border: 1px solid #5f6368; border-radius: 5px; background: none; color: #8ab4f8; font: 600 18.5px "Open Sans", "Noto Sans", sans-serif; }
.intro { margin: 20px 0 29px; font-size: 18.5px; line-height: 30px; letter-spacing: -.09px; color: #9aa0a6; white-space: nowrap; }
.intro a { color: #8ab4f8; text-decoration: underline; }
.list { list-style: none; background: #292a2d; border-radius: 12px; padding-left: 30px; box-shadow: 0 0 10px #0003; font-size: 18.5px; color: #e3e5e8; }
.list li { height: 73px; border-bottom: 1px solid #3f4043; display: flex; align-items: center; gap: 17px; padding-right: 38px; }
.list em { font-style: normal; color: #9aa0a6; }
.wider { letter-spacing: .28px; }
.list li::after { content: ""; margin-left: auto; border: 6px solid transparent; border-left: 7px solid #a4a9af; border-right: 0; }
.scroll { width: 21px; margin-left: auto; background: #fff; display: flex; flex-direction: column; align-items: center; padding: 9px 0 7px; }
.scroll svg { width: 8px; height: 5px; fill: none; stroke: #a9a9a9; stroke-width: 2; }
.scroll i { width: 8px; height: 289px; border-radius: 4px; margin-top: 15px; margin-left: 1px; background: #ced9e1; }
.scroll .down { margin-top: auto; stroke: #555; }

/* Taskbar */
.taskbar { height: 72px; background: #242424; border-top: 2px solid #3d3e40; display: flex; color: #fff; }
.weather { width: 118.4px; padding: 22px 0 0 14px; position: relative; }
.weather svg { width: 38px; height: 26px; }
.weather b { position: absolute; left: 28px; top: 10px; width: 34px; height: 22px; border-radius: 11px; background: #2a2a2a; font-size: 15px; line-height: 21px; text-align: center; font-weight: 400; }
.dock { display: flex; width: 1193.6px; }
.app { width: 66.05px; height: 70px; position: relative; display: flex; justify-content: center; padding-top: 16px; }
.app svg { width: 36px; height: 36px; }
.run::after, .current::after { content: ""; position: absolute; bottom: 7px; width: 9px; height: 5px; border-radius: 3px; background: #9a9a9a; }
.current::before { content: ""; position: absolute; left: 3px; top: 4px; width: 60px; height: 60px; border-radius: 5px; border: 1px solid #414141; background: #303030; box-shadow: inset -7px 0 0 #2a2a2a; }
.current svg { position: relative; }
.current::after { width: 24px; background: #cfa3f3; }
.pins { width: 140px; border: solid #444; border-width: 0 1px; display: flex; align-items: center; }
.pins .app { width: 72px; padding-top: 11px; }
.app .teams { width: 44px; height: 44px; margin-left: 8px; }
.count { position: absolute; left: 37px; top: 9px; width: 24px; height: 24px; border-radius: 50%; background: #c62b1e; text-align: center; font-size: 16px; line-height: 23px; }
.dots { width: 26px; height: 6px; margin-left: 16px; }
.tray { display: flex; align-items: center; font-size: 16.8px; line-height: 24px; }
.tray svg { fill: none; stroke: #fff; stroke-width: 1.9; }
.chev { width: 18px; height: 12px; margin-left: 37px; }
.sync { width: 26px; height: 30px; margin-left: 26px; }
.lang { width: 40px; text-align: center; margin-left: 24px; font-size: 16.4px; }
.wifi { width: 24px; height: 22px; margin-left: 25px; }
.vol { width: 26px; height: 24px; margin-left: 11px; }
.batt { width: 26px; height: 26px; margin-left: 10px; }
.clock { width: 100px; text-align: right; margin-left: 9px; white-space: nowrap; }
.bell { width: 22px; height: 26px; margin-left: 14px; }
```
